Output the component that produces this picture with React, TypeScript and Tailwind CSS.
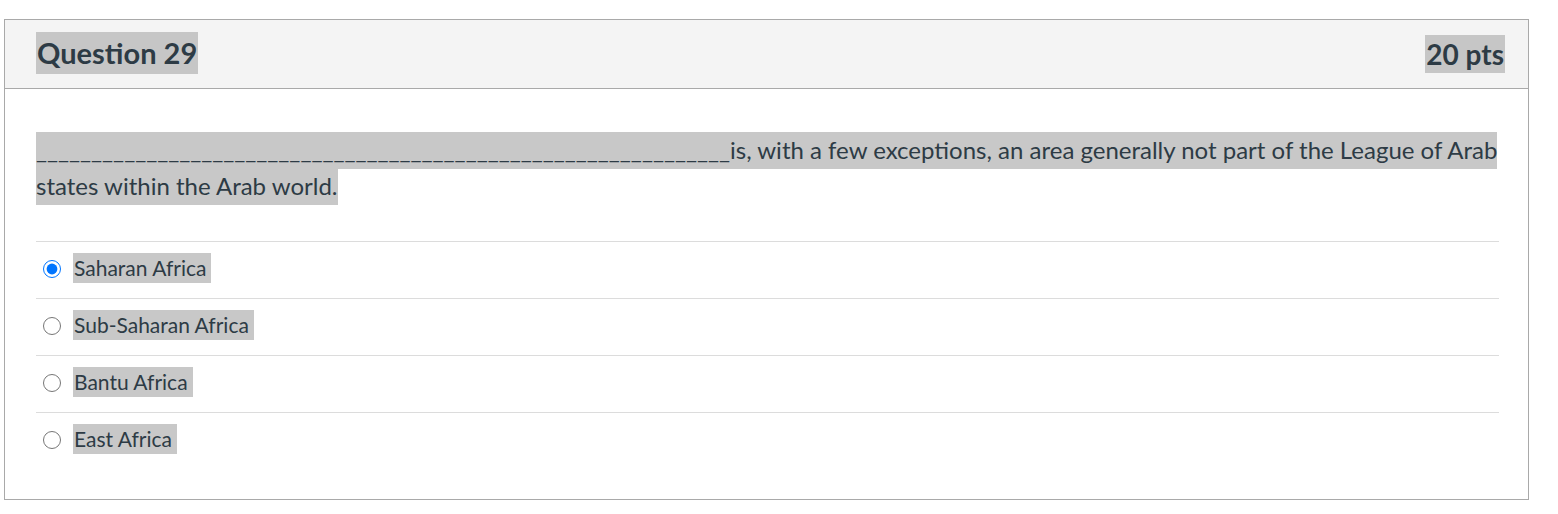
import React from "react";

const answers = [
  { label: "Saharan Africa", checked: true },
  { label: "Sub-Saharan Africa", checked: false },
  { label: "Bantu Africa", checked: false },
  { label: "East Africa", checked: false },
];

export default function App() {
  const blanks = "_".repeat(63);
  return (
    <div
      className="w-[1558px] h-[514px] bg-white pt-[19px] pl-[4px] text-[#2d3b45]"
      style={{ fontFamily: "Lato, 'Liberation Sans', sans-serif" }}
    >
      <div className="w-[1525px] h-[481px] border border-[#a9a9a9] flex flex-col">
        <div className="h-[69px] bg-[#f4f4f4] border-b border-[#a9a9a9] flex items-center justify-between pl-[31px] pr-[23px]">
          <span className="bg-[#c6c6c6] text-[29px] font-bold leading-[42px] px-[1px] mt-[-2px]">
            Question 29
          </span>
          <span className="bg-[#c6c6c6] text-[28px] font-bold leading-[38px] px-[1px]">
            20 pts
          </span>
        </div>
        <div className="pl-[31px] pr-[29px] pt-[43px]">
          <p className="text-[24px] leading-[36px]">
            <span className="bg-[#c8c8c8] pt-[3px] pb-[5px] box-decoration-clone">
              {blanks}is, with a few exceptions, an area generally not part of the League of Arab states within the Arab world.
            </span>
          </p>
          <div className="mt-[37px]">
            {answers.map((a) => (
              <div
                key={a.label}
                className="h-[57px] border-t border-[#dcdcdc] flex items-center"
              >
                <input
                  type="radio"
                  name="q29"
                  defaultChecked={a.checked}
                  className="w-[18px] h-[18px] m-0 ml-[7px] mr-[12px] mt-[-3px] accent-[#0075ff]"
                />
                <span className="bg-[#c8c8c8] text-[21px] leading-[30px] pl-[1px] pr-[5px] mt-[-5px]">
                  {a.label}
                </span>
              </div>
            ))}
          </div>
        </div>
      </div>
    </div>
  );
}
